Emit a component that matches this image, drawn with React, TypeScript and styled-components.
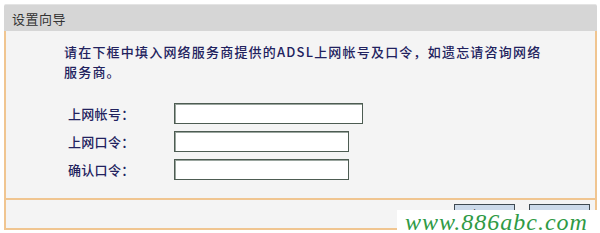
import React from 'react';
import styled, { createGlobalStyle } from 'styled-components';

const CJK = `"Noto Sans CJK SC", "DejaVu Sans", sans-serif`;
const EDGE = '#f0c590';

const GlobalStyle = createGlobalStyle`
  html, body {
    margin: 0;
    padding: 0;
    background: #ffffff;
  }
  body {
    font-family: ${CJK};
  }
`;

const Page = styled.div`
  position: relative;
  width: 600px;
  height: 233px;
  padding: 4px 3px 0 4px;
  box-sizing: border-box;
  overflow: hidden;
`;

const Panel = styled.div`
  display: flex;
  flex-direction: column;
  width: 593px;
`;

const Header = styled.div`
  display: flex;
  align-items: center;
  height: 27px;
  padding-left: 8px;
  background: #d6d6d6;
  border-top: 1px solid #e4e4e4;
  border-radius: 2px 2px 0 0;
  box-sizing: border-box;
`;

const Title = styled.span`
  font-size: 13px;
  letter-spacing: 0.5px;
  color: #333333;
`;

const Body = styled.div`
  display: flex;
  flex-direction: column;
  background: #f4f4f4;
  border-left: 2px solid ${EDGE};
  border-right: 2px solid ${EDGE};
  border-bottom: 2px solid ${EDGE};
`;

const Content = styled.div`
  display: flex;
  flex-direction: column;
  gap: 21px;
  height: 167px;
  padding: 11px 0 0 58px;
  box-sizing: border-box;
`;

const Intro = styled.p`
  margin: 0;
  width: 480px;
  font-size: 13px;
  line-height: 20px;
  letter-spacing: 1.2px;
  font-weight: 500;
  color: #22225e;
`;

const Form = styled.div`
  display: flex;
  flex-direction: column;
  gap: 7px;
  padding-left: 4px;
`;

const Row = styled.div`
  display: flex;
  align-items: center;
  height: 21px;
`;

const Label = styled.span`
  width: 106px;
  font-size: 13px;
  letter-spacing: 0.3px;
  font-weight: 500;
  color: #22225e;
`;

const Field = styled.input<{ $w: number }>`
  width: ${(p) => p.$w}px;
  height: 21px;
  box-sizing: border-box;
  border: 1px solid #4d5c52;
  box-shadow: inset 1px 1px 0 #9aa59e;
  background: #ffffff;
  padding: 0 3px;
  outline: none;
`;

const Footer = styled.div`
  display: flex;
  justify-content: flex-end;
  align-items: flex-start;
  gap: 14px;
  height: 30px;
  padding: 4px 5px 0 0;
  box-sizing: border-box;
  border-top: 2px solid ${EDGE};
`;

const Button = styled.button`
  width: 61px;
  height: 21px;
  padding: 0 0 0 6px;
  border: 1px solid #3f4a52;
  background: #ccdaea;
  font-family: ${CJK};
  font-size: 13px;
  line-height: 19px;
  letter-spacing: 6px;
  color: #111111;
  cursor: pointer;
`;

const Watermark = styled.div`
  position: absolute;
  left: 397px;
  top: 210px;
  width: 203px;
  height: 23px;
  background: #ffffff;
  display: flex;
  align-items: center;
  padding-left: 8px;
  box-sizing: border-box;
  font-family: "Liberation Serif", "DejaVu Serif", serif;
  font-style: italic;
  font-size: 24px;
  letter-spacing: 1px;
  color: #2f9a45;
  line-height: 1;
  white-space: nowrap;
  overflow: hidden;
`;

const fields = [
  { label: '上网帐号：', width: 189 },
  { label: '上网口令：', width: 175 },
  { label: '确认口令：', width: 175 },
];

export default function App() {
  return (
    <>
      <GlobalStyle />
      <Page>
        <Panel>
          <Header>
            <Title>设置向导</Title>
          </Header>
          <Body>
            <Content>
              <Intro>
                请在下框中填入网络服务商提供的ADSL上网帐号及口令，如遗忘请咨询网络服务商。
              </Intro>
              <Form>
                {fields.map((f) => (
                  <Row key={f.label}>
                    <Label>{f.label}</Label>
                    <Field $w={f.width} type={f.label === '上网帐号：' ? 'text' : 'password'} />
                  </Row>
                ))}
              </Form>
            </Content>
            <Footer>
              <Button>上一步</Button>
              <Button>下一步</Button>
            </Footer>
          </Body>
        </Panel>
        <Watermark>www.886abc.com</Watermark>
      </Page>
    </>
  );
}
